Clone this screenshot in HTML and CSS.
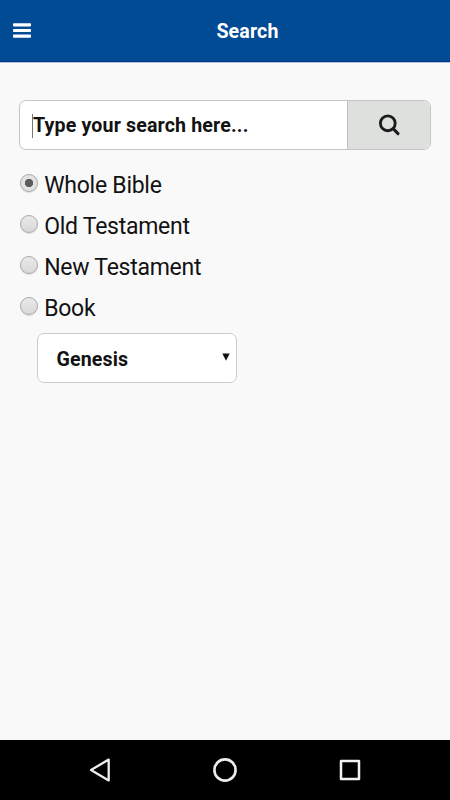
FILE: index.html
```html
<!DOCTYPE html>
<html lang="en">
<head>
<meta charset="utf-8">
<title>Search</title>
<link rel="stylesheet" href="styles.css">
</head>
<body>
<header class="topbar">
  <button class="menu" aria-label="Menu">
    <svg width="18" height="16" viewBox="0 0 18 16" fill="#fff"><rect width="18" height="3.2" rx="0.8" y="0.2"/><rect width="18" height="3.2" rx="0.8" y="5.9"/><rect width="18" height="3.2" rx="0.8" y="11.6"/></svg>
  </button>
  <h1 class="title">Search</h1>
</header>
<main class="content">
  <div class="searchbox">
    <div class="field"><span class="caret"></span><span class="placeholder">Type your search here...</span></div>
    <button class="go" aria-label="Search">
      <svg width="22" height="22" viewBox="0 0 22 22" fill="none" stroke="#1c1d1c"><circle cx="9.8" cy="9.3" r="7.4" stroke-width="2.9"/><path d="M15.4 14.9L20 19.6" stroke-width="3" stroke-linecap="round"/></svg>
    </button>
  </div>
  <div class="options">
    <label class="option"><span class="radio checked"></span><span>Whole Bible</span></label>
    <label class="option"><span class="radio"></span><span>Old Testament</span></label>
    <label class="option"><span class="radio"></span><span>New Testament</span></label>
    <label class="option"><span class="radio"></span><span>Book</span></label>
  </div>
  <div class="select"><span>Genesis</span>
    <svg width="8" height="8" viewBox="0 0 8 8"><path d="M0.3 0.4H7.7L4 7.8Z" fill="#111"/></svg>
  </div>
</main>
<footer class="navbar">
  <svg width="24" height="26" viewBox="0 0 24 26" fill="none" stroke="#eee" stroke-width="2.3" stroke-linejoin="round"><path d="M20.7 2.6V23.4L3 13Z"/></svg>
  <svg width="26" height="26" viewBox="0 0 26 26" fill="none" stroke="#eee" stroke-width="2.6"><circle cx="13" cy="13" r="10.6"/></svg>
  <svg width="24" height="26" viewBox="0 0 24 26" fill="none" stroke="#f2f2f2" stroke-width="2.5" stroke-linejoin="round"><rect x="3" y="4" width="18" height="18"/></svg>
</footer>
</body>
</html>
```
FILE: styles.css
```css
* { box-sizing: border-box; }
body {
  margin: 0;
  height: 800px;
  display: flex;
  flex-direction: column;
  background: #f9f9f9;
  color: #121212;
  font-family: Roboto, sans-serif;
}
button { border: 0; padding: 0; background: none; }
svg { display: block; }
.topbar {
  height: 62px;
  flex: none;
  display: flex;
  align-items: center;
  background: #004b93;
  box-shadow: 0 1px 0 #b9c0dc, inset 0 -1px 0 #00368a;
}
.menu { width: 45px; padding: 0 0 0 13px; }
.title {
  flex: 1;
  margin: 0;
  padding-top: 1px;
  text-align: center;
  color: #fff;
  font-size: 19.6px;
  font-weight: 700;
  letter-spacing: 0.15px;
  line-height: 62px;
}
.content { flex: 1; padding: 38px 19px 0; }
.searchbox {
  height: 50px;
  display: flex;
  border: 1px solid #c5c5c5;
  border-radius: 7px;
  overflow: hidden;
  background: #fff;
}
.field {
  flex: 1;
  display: flex;
  align-items: center;
  padding: 1px 0 0 12px;
  font-size: 19.6px;
  font-weight: 700;
  letter-spacing: 0.15px;
  white-space: nowrap;
}
.caret { width: 1px; height: 24px; background: #777; }
.go {
  width: 83px;
  display: flex;
  justify-content: center;
  align-items: center;
  background: #dee0dd;
  border-left: 1px solid #c0c2c0;
}
.options { padding-top: 14px; }
.option {
  height: 41.2px;
  display: flex;
  align-items: center;
  font-size: 23px;
  letter-spacing: -0.26px;
  line-height: 41px;
}
.option span:last-child { padding-top: 1px; }
.radio {
  width: 18px;
  height: 18px;
  margin: -4px 6.6px 0 0.6px;
  border: 1.5px solid #aaa;
  border-radius: 50%;
  background: linear-gradient(#e9e9e9, #d8d8d8);
  box-shadow: 0 1px 1px #ddd;
}
.checked { background: radial-gradient(circle, #5c5c5c 3.8px, #e2e2e2 4.5px); }
.select {
  width: 200px;
  height: 50px;
  margin: 3.8px 0 0 18.4px;
  padding: 3px 6px 0 18px;
  display: flex;
  align-items: center;
  justify-content: space-between;
  border: 1px solid #ccc;
  border-radius: 7px;
  background: #fff;
  font-size: 19.6px;
  font-weight: 700;
  letter-spacing: 0.15px;
}
.select svg { margin-top: -4px; }
.navbar {
  height: 60px;
  flex: none;
  display: flex;
  justify-content: space-between;
  align-items: center;
  padding: 0 88px;
  background: #000;
}
```
